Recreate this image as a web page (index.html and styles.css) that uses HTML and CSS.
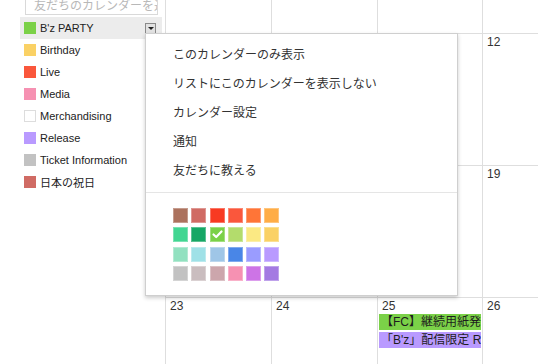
FILE: index.html
```html
<!DOCTYPE html>
<html lang="ja">
<head>
    <meta charset="utf-8">
    <title>カレンダー</title>
    <link rel="stylesheet" href="styles.css">
</head>
<body>
    <div class="page">
        <aside class="sidebar">
            <div class="search">友だちのカレンダーを追加</div>
            <ul class="cal-list">
                <li class="cal-item active">
                    <span class="chip" style="background:#7bd148"></span>
                    <span class="cal-name">B'z PARTY</span>
                    <span class="menu-btn"></span>
                </li>
                <li class="cal-item"><span class="chip" style="background:#fad165"></span><span class="cal-name">Birthday</span></li>
                <li class="cal-item"><span class="chip" style="background:#fa573c"></span><span class="cal-name">Live</span></li>
                <li class="cal-item"><span class="chip" style="background:#f691b2"></span><span class="cal-name">Media</span></li>
                <li class="cal-item"><span class="chip chip-empty"></span><span class="cal-name">Merchandising</span></li>
                <li class="cal-item"><span class="chip" style="background:#b99aff"></span><span class="cal-name">Release</span></li>
                <li class="cal-item"><span class="chip" style="background:#c2c2c2"></span><span class="cal-name">Ticket Information</span></li>
                <li class="cal-item"><span class="chip" style="background:#d06b64"></span><span class="cal-name">日本の祝日</span></li>
            </ul>
        </aside>

        <main class="month">
            <div class="day first"></div>
            <div class="day first"></div>
            <div class="day first"></div>
            <div class="day first"></div>

            <!-- days under the open menu are left blank -->
            <div class="day"></div>
            <div class="day"></div>
            <div class="day"></div>
            <div class="day"><span class="num">12</span></div>

            <div class="day"></div>
            <div class="day"></div>
            <div class="day"></div>
            <div class="day"><span class="num">19</span></div>

            <div class="day"><span class="num">23</span></div>
            <div class="day"><span class="num">24</span></div>
            <div class="day">
                <span class="num">25</span>
                <div class="event ev-green">【FC】継続用紙発送のお知らせ</div>
                <div class="event ev-purple">「B'z」配信限定 Release</div>
            </div>
            <div class="day"><span class="num">26</span></div>
        </main>

        <div class="popup">
            <ul class="popup-menu">
                <li>このカレンダーのみ表示</li>
                <li>リストにこのカレンダーを表示しない</li>
                <li>カレンダー設定</li>
                <li>通知</li>
                <li>友だちに教える</li>
            </ul>
            <div class="palette">
                <span style="background:#ac725e"></span>
                <span style="background:#d06b64"></span>
                <span style="background:#f83a22"></span>
                <span style="background:#fa573c"></span>
                <span style="background:#ff7537"></span>
                <span style="background:#ffad46"></span>
                <span style="background:#42d692"></span>
                <span style="background:#16a765"></span>
                <span class="picked" style="background:#7bd148">
                    <svg viewBox="0 0 15 15" width="15" height="15"><polyline points="3.5,7.5 6.2,10 11.5,4.5" fill="none" stroke="#fff" stroke-width="2.2" stroke-linecap="round" stroke-linejoin="round"/></svg>
                </span>
                <span style="background:#b3dc6c"></span>
                <span style="background:#fbe983"></span>
                <span style="background:#fad165"></span>
                <span style="background:#92e1c0"></span>
                <span style="background:#9fe1e7"></span>
                <span style="background:#9fc6e7"></span>
                <span style="background:#4986e7"></span>
                <span style="background:#9a9cff"></span>
                <span style="background:#b99aff"></span>
                <span style="background:#c2c2c2"></span>
                <span style="background:#cabdbf"></span>
                <span style="background:#cca6ac"></span>
                <span style="background:#f691b2"></span>
                <span style="background:#cd74e6"></span>
                <span style="background:#a47ae2"></span>
            </div>
        </div>
    </div>
</body>
</html>
```

FILE: styles.css
```css
* { margin: 0; padding: 0; box-sizing: border-box; }
body {
    font-family: "Liberation Sans", Arial, "Noto Sans CJK JP", sans-serif;
    background: #fff;
    color: #222;
    overflow: hidden;
}
.page {
    position: relative;
    display: flex;
    height: 364px;
    overflow: hidden;
}

/* sidebar */
.sidebar {
    width: 165px;
    flex-shrink: 0;
    padding: 0 3px 0 20px;
}
.search {
    margin: -6px 4px 0 5px;
    height: 21px;
    border: 1px solid #d9d9d9;
    border-top-color: #c0c0c0;
    padding-left: 8px;
    line-height: 19px;
    font-size: 12px;
    font-family: "Noto Sans CJK JP", sans-serif;
    color: #b8b8b8;
    white-space: nowrap;
    overflow: hidden;
}
.cal-list {
    list-style: none;
    margin-top: 2px;
}
.cal-item {
    display: flex;
    align-items: center;
    height: 22px;
    padding: 0 6px 0 4px;
    font-size: 11px;
    color: #222;
}
.cal-item.active { background: #ececec; }
.chip {
    width: 12px;
    height: 12px;
    margin-right: 4px;
    flex-shrink: 0;
}
.chip-empty {
    background: #fff;
    border: 1px solid #ddd;
}
.cal-name {
    flex: 1;
    white-space: nowrap;
}
.menu-btn {
    width: 11px;
    height: 11px;
    border: 1px solid #8a8a8a;
    background: #e2e2e2;
    display: flex;
    align-items: center;
    justify-content: center;
}
.menu-btn::after {
    content: "";
    border-left: 3px solid transparent;
    border-right: 3px solid transparent;
    border-top: 3px solid #222;
}

/* month grid */
.month {
    flex: 1;
    display: grid;
    grid-template-columns: 106px 106px 105px 106px;
    grid-template-rows: 33px 132px 132px 132px;
    font-size: 12px;
    color: #333;
}
.day {
    border-left: 1px solid #dedede;
    border-top: 1px solid #dedede;
    padding-top: 1px;
    min-width: 0;
}
.day.first { border-top: none; }
.num {
    display: block;
    padding-left: 4px;
    height: 15px;
    line-height: 15px;
}
.event {
    margin: 0 1px 2px 1px;
    height: 16px;
    line-height: 16px;
    padding-left: 2px;
    font-size: 12px;
    font-family: "Liberation Sans", "Noto Sans CJK JP", sans-serif;
    color: #1d1d1d;
    white-space: nowrap;
    overflow: hidden;
}
.ev-green { background: #7bd148; }
.ev-purple { background: #b99aff; }

/* popup menu */
.popup {
    position: absolute;
    left: 145px;
    top: 33px;
    width: 313px;
    height: 263px;
    background: #fff;
    border: 1px solid #cfcfcf;
    box-shadow: 0 2px 4px rgba(0,0,0,0.2);
    font-family: "Noto Sans CJK JP", sans-serif;
}
.popup-menu {
    list-style: none;
    padding: 5px 0 8px;
    border-bottom: 1px solid #e5e5e5;
}
.popup-menu li {
    height: 29px;
    line-height: 29px;
    padding-left: 27px;
    font-size: 12px;
    color: #333;
}
.palette {
    display: grid;
    grid-template-columns: repeat(6, 15px);
    grid-auto-rows: 15px;
    column-gap: 3.3px;
    row-gap: 4.3px;
    padding: 15px 0 0 27px;
}
.palette span {
    display: block;
    box-shadow: inset 0 0 0 1px rgba(255,255,255,0.3);
}
.palette svg { display: block; }
```
